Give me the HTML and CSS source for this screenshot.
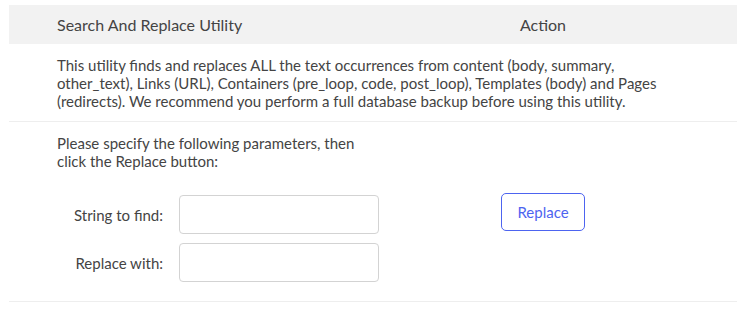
FILE: index.html
```html
<!DOCTYPE html>
<html lang="en">
<head>
    <meta charset="UTF-8">
    <meta name="viewport" content="width=device-width, initial-scale=1.0">
    <title>Search And Replace Utility</title>
    <link rel="stylesheet" href="styles.css">
</head>
<body>
    <div class="utility">
        <div class="utility-head">
            <div class="col-main">Search And Replace Utility</div>
            <div class="col-action">Action</div>
        </div>
        <div class="utility-desc">
            This utility finds and replaces ALL the text occurrences from content (body, summary, other_text), Links (URL), Containers (pre_loop, code, post_loop), Templates (body) and Pages (redirects). We recommend you perform a full database backup before using this utility.
        </div>
        <form class="utility-row" id="replaceForm">
            <div class="col-main">
                <p class="intro">Please specify the following parameters, then click the Replace button:</p>
                <div class="fields">
                    <label for="find">String to find:</label>
                    <input type="text" id="find" name="find">
                    <label for="replace">Replace with:</label>
                    <input type="text" id="replace" name="replace">
                </div>
            </div>
            <div class="col-action">
                <button type="submit" class="btn">Replace</button>
            </div>
        </form>
    </div>
</body>
</html>
```

FILE: styles.css
```css
body {
    font-family: Lato, "Open Sans", sans-serif;
    font-size: 15px;
    color: #444;
    background: #fff;
    margin: 0;
    padding: 5px 8px 0 9px;
}

.utility {
    width: 728px;
}

.utility-head {
    display: flex;
    align-items: center;
    height: 39px;
    background: #f2f2f2;
    font-size: 16px;
}

.col-main {
    width: 340px;
    padding-left: 48px;
    box-sizing: border-box;
    flex-shrink: 0;
}

.col-action {
    flex: 1;
    text-align: center;
}

.utility-desc {
    padding: 12px 48px 11px;
    line-height: 18px;
    border-bottom: 1px solid #eee;
}

.utility-row {
    display: flex;
    border-bottom: 1px solid #eee;
    margin: 0;
}

.utility-row .col-main {
    padding-bottom: 19px;
}

.intro {
    margin: 12px 0 25px;
    line-height: 18px;
    width: 310px;
}

.fields {
    display: grid;
    grid-template-columns: 106px 200px;
    column-gap: 16px;
    row-gap: 9px;
    align-items: center;
}

.fields label {
    text-align: right;
}

.fields input {
    height: 39px;
    border: 1px solid #d3d3d3;
    border-radius: 4px;
    box-sizing: border-box;
    font-size: 15px;
    padding: 0 10px;
}

.utility-row .col-action {
    padding-top: 71px;
}

.btn {
    width: 84px;
    height: 38px;
    background: #fff;
    color: #4d64f0;
    border: 1px solid #4d64f0;
    border-radius: 5px;
    font-family: inherit;
    font-size: 15px;
    cursor: pointer;
}
```
